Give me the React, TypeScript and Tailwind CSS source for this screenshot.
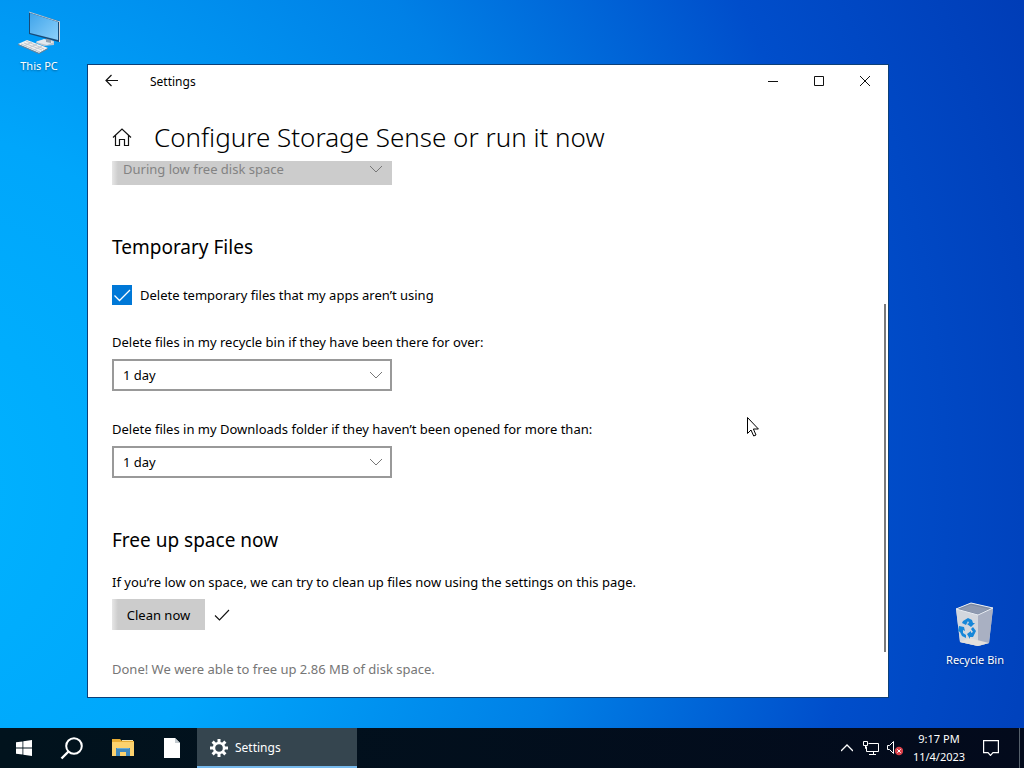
import { useState } from "react";
import type { ReactNode } from "react";

const AGE_OPTIONS = ["Never", "1 day", "14 days", "30 days", "60 days"];

function ThisPcIcon() {
  return (
    <svg className="h-12 w-12" viewBox="0 0 48 48" fill="none">
      <defs>
        <linearGradient id="screen" x1="0" y1="0" x2="1" y2="1">
          <stop offset="0" stopColor="#3fa4ea" />
          <stop offset="1" stopColor="#8cd0fb" />
        </linearGradient>
      </defs>
      <path d="M22 34l12-2 5 2v4l-10 1-8-3z" fill="#b9c4ce" />
      <path d="M21 35l8-3 10 3-7 3z" fill="#e4eaef" />
      <path d="M31 31l5 1v4l-5-1z" fill="#93a3b2" />
      <path d="M14 5l30 9v21l-30-8z" fill="#174a78" />
      <path d="M15 6l28 9v18l-28-7z" fill="url(#screen)" />
      <path d="M44 14l1 1v20l-1 0z" fill="#cfd6dc" />
      <path d="M14 5l31 10" stroke="#b4c7d6" />
      <path d="M3 37l9-4 21 8-9 5z" fill="#f1f1f1" />
      <path d="M3 37v1l21 9 9-5v-1l-9 5z" fill="#77808c" />
      <path d="M6 37l19 8M9 36l18 7M11 34l18 8M9 39l8-4M14 41l8-4M19 43l8-4" stroke="#c3c8ce" />
    </svg>
  );
}

function RecycleBinIcon() {
  return (
    <svg className="h-12 w-12" viewBox="0 0 48 48" fill="none">
      <path d="M5 8l15-6 22 5-4 35-11 3-18-4z" fill="#c3c9d4" />
      <path d="M5 8l22 6v31l-18-4z" fill="#d3d7de" />
      <path d="M27 14l15-7-4 35-11 3z" fill="#a9b0c2" />
      <path d="M5 8l15-6 22 5-15 7z" fill="#7d8ba4" />
      <path d="M9 8l11-4 18 4-11 5z" fill="#8f9ab0" />
      <path d="M5 8l15-6 22 5-15 7z" stroke="#e9edf3" />
      <path d="M9 41l9-4 20 5-11 3z" fill="#e3e0dc" />
      <g fill="#1687d9">
        <path d="M12 20l5-3 4 2 1 3 2 0-4 4-4-3 2-1-1-2-2 4-4-2z" />
        <path d="M8 25l5 1 1 4-2-1 0 3 3 2v3l-4-2-2-4-2-1z" />
        <path d="M22 26l3 4-3 6h-3v2l-3-5 4-3v2l2-1-2-3z" />
      </g>
    </svg>
  );
}

function ExplorerIcon() {
  return (
    <svg className="h-5 w-[22px]" viewBox="0 0 22 20">
      <path d="M0 1h8l2 2h12v15H0z" fill="#e8ad35" />
      <path d="M0 4h22v14H0z" fill="#fcd26e" />
      <path d="M10 2h11v1H10z" fill="#f4e2a9" />
      <path d="M4 10h14v8h-4v-4H8v4H4z" fill="#3f88bd" />
      <path d="M5 10h12v1H5z" fill="#69acd6" />
    </svg>
  );
}

function GearIcon() {
  return (
    <svg className="h-[18px] w-[18px]" viewBox="0 0 18 18" fill="none" stroke="#fff">
      <circle cx="9" cy="9" r="5" strokeWidth="2.4" />
      <path
        d="M9 0v4M9 14v4M0 9h4M14 9h4M2.6 2.6l2.8 2.8M12.6 12.6l2.8 2.8M2.6 15.4l2.8-2.8M12.6 5.4l2.8-2.8"
        strokeWidth="3"
      />
    </svg>
  );
}

function ChevronDown() {
  return (
    <svg
      className="pointer-events-none absolute top-3 right-2 h-2 w-4"
      viewBox="0 0 16 8"
      fill="none"
      stroke="#777"
    >
      <path d="M2 1l6 6 6-6" />
    </svg>
  );
}

function DesktopIcon({ label, children }: { label: string; children: ReactNode }) {
  return (
    <button className="flex w-[76px] flex-col items-center gap-[3px] text-[11px] leading-4 text-white [text-shadow:0_1px_2px_#0006]">
      {children}
      {label}
    </button>
  );
}

function AgeSelect({ id, label }: { id: string; label: string }) {
  const [value, setValue] = useState("1 day");

  return (
    <div className="flex flex-col items-start gap-[7px]">
      <label htmlFor={id}>{label}</label>
      <div className="relative w-[280px]">
        <select
          id={id}
          value={value}
          onChange={(e) => setValue(e.target.value)}
          className="block h-8 w-full appearance-none border-2 border-[#999] bg-white px-[9px]"
        >
          {AGE_OPTIONS.map((option) => (
            <option key={option}>{option}</option>
          ))}
        </select>
        <ChevronDown />
      </div>
    </div>
  );
}

function SettingsWindow() {
  const [deleteTemp, setDeleteTemp] = useState(true);

  return (
    <section className="absolute top-16 right-[135px] bottom-[30px] left-[87px] flex flex-col border border-[#0c3f78] bg-white">
      {/* Title bar */}
      <header className="flex h-8 shrink-0 items-center text-[12px]">
        <button aria-label="Back" className="flex h-8 w-12 items-center justify-center">
          <svg className="h-3.5 w-3.5" viewBox="0 0 14 14" fill="none" stroke="#111" strokeWidth="1.2">
            <path d="M13 6.500H1M6.500 1L1 6.500 6.500 12" />
          </svg>
        </button>
        <span className="ml-3.5 flex-1 pt-0.5">Settings</span>
        <button aria-label="Minimize" className="flex h-8 w-[46px] items-center justify-center">
          <svg className="h-3 w-3" viewBox="0 0 12 12" fill="none" stroke="#111">
            <path d="M1 6.500h10" />
          </svg>
        </button>
        <button aria-label="Maximize" className="flex h-8 w-[46px] items-center justify-center">
          <svg className="h-3 w-3" viewBox="0 0 12 12" fill="none" stroke="#111">
            <path d="M1.500 1.500h9v9h-9z" />
          </svg>
        </button>
        <button aria-label="Close" className="flex h-8 w-[46px] items-center justify-center">
          <svg className="h-3 w-3" viewBox="0 0 12 12" fill="none" stroke="#111">
            <path d="M1 1l10 10M11 1L1 11" />
          </svg>
        </button>
      </header>

      <div className="flex h-16 shrink-0 items-center gap-[22px] pt-4 pl-6">
        <button aria-label="Home">
          <svg className="h-5 w-5" viewBox="0 0 20 20" fill="none" stroke="#111" strokeWidth="1.2">
            <path d="M1 10.500l9-8.500 9 8.500M3.500 8.500V18.500h4v-6h5v6h4V8.500" />
          </svg>
        </button>
        <h1 className="text-[26px] leading-9 font-[350]">Configure Storage Sense or run it now</h1>
      </div>

      <div className="relative min-h-0 flex-1 overflow-hidden pl-6 text-[13px] leading-5">
        <div className="relative -mt-2 w-[280px]">
          <select
            aria-label="Run Storage Sense"
            disabled
            className="block h-8 w-full appearance-none bg-[#ccc] bg-linear-to-r from-[#e6e6e6] to-[#ccc] to-[6px] px-[11px] text-[#838383] opacity-100"
          >
            <option>During low free disk space</option>
          </select>
          <ChevronDown />
        </div>

        <h2 className="mt-12 text-[19px] leading-7">Temporary Files</h2>
        <label className="mt-6 flex items-center gap-2">
          <span className="relative h-5 w-5">
            <input
              type="checkbox"
              checked={deleteTemp}
              onChange={(e) => setDeleteTemp(e.target.checked)}
              className="peer block h-5 w-5 appearance-none border-2 border-[#333] checked:border-[#0078d7] checked:bg-[#0078d7]"
            />
            <svg
              className="pointer-events-none absolute inset-0 hidden h-5 w-5 peer-checked:block"
              viewBox="0 0 20 20"
              fill="none"
              stroke="#fff"
              strokeWidth="1.3"
            >
              <path d="M2.500 10.500l5 5L18 5" />
            </svg>
          </span>
          Delete temporary files that my apps aren’t using
        </label>

        <div className="mt-[27px] flex flex-col gap-7">
          <AgeSelect id="recycle-age" label="Delete files in my recycle bin if they have been there for over:" />
          <AgeSelect
            id="downloads-age"
            label="Delete files in my Downloads folder if they haven’t been opened for more than:"
          />
        </div>

        <h2 className="mt-12 text-[19px] leading-7">Free up space now</h2>
        <p className="mt-[18px]">
          If you’re low on space, we can try to clean up files now using the settings on this page.
        </p>
        <div className="mt-[7px] flex items-center gap-[9px]">
          <button className="h-[31px] w-[93px] bg-[#ccc] bg-linear-to-r from-[#e6e6e6] to-[#ccc] to-[6px]">
            Clean now
          </button>
          <svg className="h-4 w-4" viewBox="0 0 16 16" fill="none" stroke="#111" strokeWidth="1.1">
            <path d="M1 8.500l4.500 4.500L15 3" />
          </svg>
        </div>
        <p className="mt-[29px] text-[#767676]">Done! We were able to free up 2.86 MB of disk space.</p>

        <div className="absolute top-[143px] right-[2px] bottom-[45px] w-[2px] bg-[#7a7a7a]" />
      </div>
    </section>
  );
}

function Taskbar() {
  return (
    <footer className="flex h-10 shrink-0 items-stretch bg-linear-to-r from-[#01131d] to-[#030a1c] text-white">
      <nav className="flex flex-1 items-stretch">
        <button aria-label="Start" className="flex w-12 items-center justify-center">
          <svg className="h-4 w-4" viewBox="0 0 16 16" fill="#fff">
            <path d="M0 2.300L6.500 1.400v6.200H0zM7.300 1.300L16 0v7.600H7.300zM0 8.400h6.500v6.200L0 13.700zM7.300 8.400H16V16l-8.700-1.300z" />
          </svg>
        </button>
        <button aria-label="Search" className="flex w-12 items-center justify-center">
          <svg className="h-6 w-6" viewBox="0 0 24 24" fill="none" stroke="#fff" strokeWidth="2">
            <circle cx="14" cy="10" r="7.800" />
            <path d="M8.500 15.500L1.500 22.500" strokeWidth="2.400" />
          </svg>
        </button>
        <button aria-label="File Explorer" className="flex w-[54px] items-center justify-center">
          <ExplorerIcon />
        </button>
        <button aria-label="Document" className="mr-1 flex w-[43px] items-center justify-center">
          <svg className="h-5 w-4" viewBox="0 0 16 20">
            <path d="M0 0h11l5 5v15H0z" fill="#fff" />
            <path d="M11 0v5h5z" fill="#c4cbd0" />
          </svg>
        </button>
        <button className="flex w-40 items-center gap-[7px] border-b-2 border-[#76b9ed] bg-[#35454f] pt-0.5 pl-[13px] text-[12px]">
          <GearIcon />
          Settings
        </button>
      </nav>

      <div className="flex items-center">
        <button aria-label="Show hidden icons" className="flex h-full w-6 items-center justify-center">
          <svg className="h-3 w-3" viewBox="0 0 12 12" fill="none" stroke="#fff" strokeWidth="1.3">
            <path d="M0 9l6-6 6 6" />
          </svg>
        </button>
        <button aria-label="Network" className="flex h-full w-6 items-center justify-center">
          <svg className="h-4 w-4" viewBox="0 0 16 16" fill="none" stroke="#fff">
            <path d="M5.500 3.500h10v8H3.500v-5M10.500 11.500v3M6 14.500h7M.5 1.500h4v4h-4zM2.500 5.500v3h1" />
          </svg>
        </button>
        <button aria-label="Volume muted" className="flex h-full w-6 items-center justify-center">
          <svg className="h-4 w-4" viewBox="0 0 16 16" fill="none">
            <path d="M.5 5.500h2l4-4v12l-4-4h-2z" stroke="#fff" />
            <circle cx="12" cy="11" r="4.200" fill="#d9414a" />
            <path d="M10.300 9.300l3.400 3.400M13.700 9.300l-3.400 3.400" stroke="#fff" />
          </svg>
        </button>
        <button className="w-16 text-center text-[11px] leading-[18px]">
          <span className="block">9:17 PM</span>
          <span className="block">11/4/2023</span>
        </button>
        <button aria-label="Notifications" className="flex h-full w-10 items-center justify-center">
          <svg className="h-4 w-4" viewBox="0 0 16 16" fill="none" stroke="#fff" strokeWidth="1.2">
            <path d="M.6.6h14.800v12H10l-2.500 2.800L5 12.600H.6z" />
          </svg>
        </button>
        <button aria-label="Show desktop" className="ml-2 h-full w-[5px] border-l border-[#56606c]" />
      </div>
    </footer>
  );
}

export default function App() {
  return (
    <div className="flex h-screen min-h-[740px] flex-col bg-[radial-gradient(ellipse_120%_170%_at_-10%_64%,#00b4ff_0%,#00a6fb_28%,#0080e6_55%,#004ecb_78%,#003cb6_100%)] font-['Noto_Sans','Open_Sans',sans-serif] text-black">
      <main className="relative flex-1">
        <div className="absolute top-[7px] left-[1px]">
          <DesktopIcon label="This PC">
            <ThisPcIcon />
          </DesktopIcon>
        </div>
        <div className="absolute right-[11px] bottom-[60px]">
          <DesktopIcon label="Recycle Bin">
            <RecycleBinIcon />
          </DesktopIcon>
        </div>
        <SettingsWindow />
        {/* Mouse pointer */}
        <svg
          className="pointer-events-none absolute top-[417px] left-[747px] h-5 w-3"
          viewBox="0 0 12 20"
          fill="#fff"
          stroke="#000"
        >
          <path d="M.5.5v16l3.500-3.500 2.700 6 2.300-1-2.600-6h5z" />
        </svg>
      </main>
      <Taskbar />
    </div>
  );
}
